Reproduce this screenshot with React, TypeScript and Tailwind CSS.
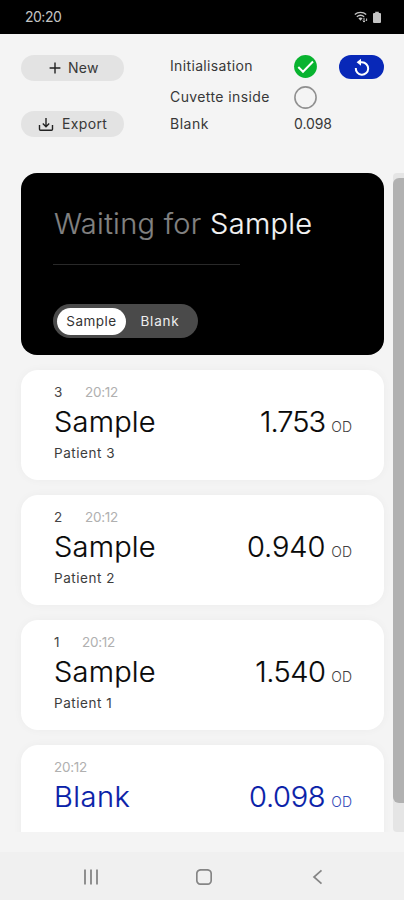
type Reading = {
  index?: string;
  indexWidth?: string;
  title: string;
  patient?: string;
  value: string;
  valueTracking: string;
};

const readings: Reading[] = [
  { index: '3', indexWidth: 'w-[31px]', title: 'Sample', patient: 'Patient 3', value: '1.753', valueTracking: 'tracking-[-0.9px]' },
  { index: '2', indexWidth: 'w-[31px]', title: 'Sample', patient: 'Patient 2', value: '0.940', valueTracking: 'tracking-[-0.1px]' },
  { index: '1', indexWidth: 'w-[28px]', title: 'Sample', patient: 'Patient 1', value: '1.540', valueTracking: 'tracking-[-0.5px]' },
  { title: 'Blank', value: '0.098', valueTracking: 'tracking-[-0.3px]' },
];

function StatusBar() {
  return (
    <div className="flex h-[34px] shrink-0 items-center justify-between bg-black pl-[25px] pr-[22px] text-[#c4c4c4]">
      <span className="text-[14px] leading-5 tracking-[-0.5px]">20:20</span>
      <div className="flex items-center gap-[4px]">
        <svg width="14" height="12" viewBox="0 0 14 12" fill="none" stroke="currentColor" strokeWidth="1.3">
          <path d="M.8 3.600C4 .7 9 .7 12.200 3.600M2.800 5.700C5 4 8 4 10.200 5.700" />
          <path d="M4.400 7.300C5.800 6.300 7.200 6.300 8.600 7.300L6.500 9.800z" fill="currentColor" stroke="none" />
          <path d="M10 6.800v4.400M8.700 9.700 10 11l1.300-1.300M12.600 10V7.500" strokeWidth="1" />
        </svg>
        <svg width="10" height="13" viewBox="0 0 10 13" fill="currentColor">
          <path d="M3.200.8h3.600v1.300H8a1 1 0 0 1 1 1v8a1 1 0 0 1-1 1H2a1 1 0 0 1-1-1v-8a1 1 0 0 1 1-1h1.200z" />
        </svg>
      </div>
    </div>
  );
}

function Header() {
  return (
    <header className="flex h-[139px] shrink-0 pl-[21px] pt-[21px] text-[14px] leading-5 text-[#383838]">
      <div className="flex w-[103px] flex-col gap-[30px]">
        <button className="flex h-[26px] items-center rounded-full bg-[#e3e3e3] pl-[28px]">
          <svg className="mr-[7px]" width="12" height="12" viewBox="0 0 12 12" stroke="#222" strokeWidth="1.4">
            <path d="M6 .6v10.800M.6 6h10.800" />
          </svg>
          <span className="tracking-[0.3px]">New</span>
        </button>
        <button className="flex h-[26px] items-center rounded-full bg-[#e3e3e3] pl-[17px]">
          <svg className="mr-[8px]" width="16" height="15" viewBox="0 0 16 15" fill="none" stroke="#222" strokeWidth="1.4">
            <path d="M1.500 8v4.300q0 1 1 1h11q1 0 1-1V8M8 1v8.500M4.800 6.500 8 9.700l3.200-3.200" />
          </svg>
          <span className="tracking-[0.35px]">Export</span>
        </button>
      </div>
      <div className="ml-[46px] flex w-[124px] flex-col pt-[1px]">
        <span className="h-[31px] tracking-[0.35px]">Initialisation</span>
        <span className="h-[27px] tracking-[0.4px]">Cuvette inside</span>
        <span className="tracking-[0.5px]">Blank</span>
      </div>
      <div className="flex w-[45px] flex-col">
        <svg width="23" height="23" viewBox="0 0 23 23" fill="none">
          <circle cx="11.500" cy="11.500" r="11.400" fill="#08b32f" />
          <path d="m4.300 12 4.700 4.800L19 6.500" stroke="#fff" strokeWidth="2" />
        </svg>
        <svg className="mt-[8px]" width="23" height="23" viewBox="0 0 23 23" fill="none">
          <circle cx="11.500" cy="11.500" r="10.600" stroke="#909090" strokeWidth="1.600" />
        </svg>
        <span className="mt-[5px] tracking-[-0.1px]">0.098</span>
      </div>
      <button className="flex h-[24px] w-[45px] items-center justify-center rounded-full bg-[#0828b8]">
        <svg width="18" height="18" viewBox="0 0 18 18" fill="none" stroke="#fff" strokeWidth="2">
          <path d="M2.800 10A6.200 6.200 0 1 0 9 4.300H6.500" />
          <path d="M8 .8v7L3.600 4.300z" fill="#fff" stroke="none" />
        </svg>
      </button>
    </header>
  );
}

function WaitingCard() {
  return (
    <section className="flex h-[182px] shrink-0 flex-col rounded-[16px] bg-black pl-[32px] pt-[31px]">
      <h1 className="pl-px text-[29px] font-light leading-[40px] tracking-[0.3px] text-[#828282] [-webkit-text-stroke:0.2px]">
        Waiting for <span className="text-[#f4f4f4]">Sample</span>
      </h1>
      <div className="mt-[20px] h-px w-[187px] bg-[#292929]" />
      <div className="mt-[39px] flex h-[34px] w-[145px] items-center rounded-full bg-[#4a4a4a] px-[4px] text-[13.5px] leading-5">
        <span className="flex h-[27px] w-[69px] items-center justify-center rounded-full bg-white tracking-[0.5px] text-[#333]">Sample</span>
        <span className="flex-1 text-center tracking-[0.8px] text-[#eee]">Blank</span>
      </div>
    </section>
  );
}

function ReadingCard({ reading }: { reading: Reading }) {
  const isBlank = !reading.patient;
  return (
    <article className="flex h-[110px] shrink-0 flex-col rounded-[17px] bg-white pl-[33px] pr-[32px] pt-[12px] shadow-[0_0_10px_rgba(0,0,0,0.035)]">
      <div className="flex text-[13.5px] leading-5">
        {reading.index && <span className={`${reading.indexWidth} text-[#444]`}>{reading.index}</span>}
        <span className="tracking-[-0.3px] text-[#b0b0b0]">20:12</span>
      </div>
      <div className={`flex items-baseline justify-between font-light ${isBlank ? 'text-[#0820a8]' : 'text-[#080808]'}`}>
        <span className={`pt-px text-[29px] leading-[38px] [-webkit-text-stroke:0.2px] ${isBlank ? 'tracking-[0.5px]' : 'tracking-[0.2px]'}`}>
          {reading.title}
        </span>
        <span className="flex items-baseline">
          <span className={`text-[29px] leading-[38px] [-webkit-text-stroke:0.2px] ${reading.valueTracking}`}>{reading.value}</span>
          <span className={`ml-[6px] text-[14px] leading-5 ${isBlank ? 'text-[#3048b8]' : 'text-[#404040]'}`}>OD</span>
        </span>
      </div>
      {reading.patient && <span className="mt-[2px] text-[13.5px] leading-5 tracking-[0.55px] text-[#3c3c3c]">{reading.patient}</span>}
    </article>
  );
}

function NavigationBar() {
  return (
    <nav className="mt-[20px] flex h-[48px] shrink-0 items-center justify-center gap-[97px] bg-[#f0f0f0] pl-[4px] pt-[2px] text-[#858585]">
      <svg width="16" height="16" viewBox="0 0 16 16" fill="none" stroke="currentColor" strokeWidth="1.800">
        <path d="M2 .5v15M8 .5v15M14 .5v15" />
      </svg>
      <svg width="16" height="16" viewBox="0 0 16 16" fill="none" stroke="currentColor" strokeWidth="1.700">
        <rect x=".8" y=".8" width="14.400" height="14.400" rx="4" />
      </svg>
      <svg width="16" height="16" viewBox="0 0 16 16" fill="none" stroke="currentColor" strokeWidth="1.700">
        <path d="M12.500 1.300 5 8l7.500 6.700" />
      </svg>
    </nav>
  );
}

export default function App() {
  return (
    <div className="flex h-[900px] w-[404px] flex-col overflow-hidden bg-[#f4f4f4] font-['Inter',sans-serif]">
      <StatusBar />
      <Header />
      <main className="flex h-[659px] shrink-0 overflow-hidden">
        <div className="flex h-full w-[393px] flex-col gap-[15px] overflow-hidden pl-[21px] pr-[9px]">
          <WaitingCard />
          {readings.map((reading, i) => (
            <ReadingCard key={i} reading={reading} />
          ))}
        </div>
        <div className="h-full w-[11px] rounded-l-[4px] bg-[#e5e5e5] pt-[5px]">
          <div className="h-[625px] rounded-l-[6px] bg-[#b1b1b1]" />
        </div>
      </main>
      <NavigationBar />
    </div>
  );
}
